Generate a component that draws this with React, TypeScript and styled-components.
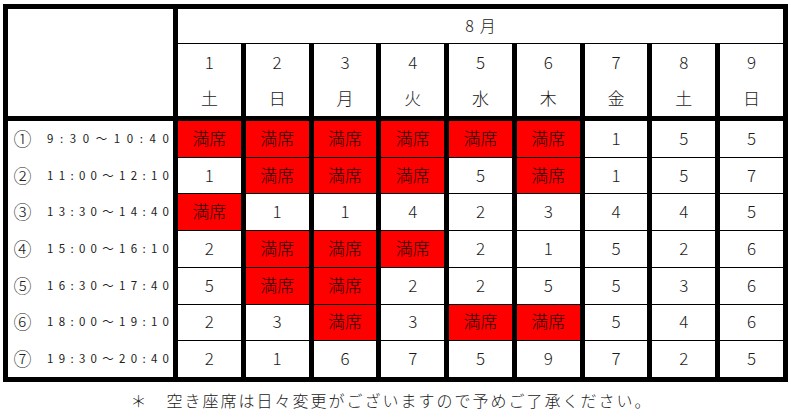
import React from "react";
import styled, { createGlobalStyle } from "styled-components";

const GlobalStyle = createGlobalStyle`
  html, body {
    margin: 0;
    padding: 0;
    background: #ffffff;
  }
  body {
    padding: 4px 0 0 3px;
    font-family: "Noto Sans CJK JP", "Noto Sans", sans-serif;
    font-weight: 300;
    color: #1a1a1a;
  }
`;

const Page = styled.div`
  width: 785px;
  display: flex;
  flex-direction: column;
`;

const Frame = styled.div`
  width: 785px;
  height: 378px;
  box-sizing: border-box;
  border: 5px solid #000;
  background: #000;
  display: flex;
  flex-direction: column;
`;

const HeaderGrid = styled.div`
  display: grid;
  grid-template-columns: 165px repeat(9, 1fr);
  grid-template-rows: 34px 72px;
  column-gap: 5px;
  row-gap: 1px;
  border-bottom: 5px solid #000;
`;

const Corner = styled.div`
  grid-row: 1 / span 2;
  background: #fff;
`;

const Month = styled.div`
  grid-column: 2 / -1;
  background: #fff;
  display: flex;
  align-items: center;
  justify-content: center;
  gap: 6px;
  font-size: 16px;
  padding-bottom: 3px;
  box-sizing: border-box;
`;

const DayHead = styled.div`
  background: #fff;
  display: grid;
  grid-template-rows: 1fr 1fr;
  justify-items: center;
  align-items: center;
  font-size: 17px;
`;

const DayNum = styled.span`
  padding-bottom: 2px;
`;

const Weekday = styled.span`
  padding-bottom: 2px;
`;

const BodyGrid = styled.div`
  flex: 1;
  display: grid;
  grid-template-columns: 165px repeat(9, 1fr);
  grid-template-rows: repeat(7, 1fr);
  column-gap: 5px;
  row-gap: 1px;
`;

const LabelColumn = styled.div`
  grid-column: 1;
  grid-row: 1 / -1;
  display: grid;
  grid-template-rows: subgrid;
  background: #fff;
`;

const Label = styled.div`
  display: flex;
  align-items: center;
  padding: 0 4px 2px 5px;
`;

const Circle = styled.span`
  font-size: 18px;
  line-height: 1;
  width: 19px;
  display: inline-flex;
  justify-content: center;
  color: #222;
`;

const TimeText = styled.span`
  flex: 1;
  margin-left: 15px;
  display: flex;
  justify-content: space-between;
  font-size: 11.5px;
  font-weight: 400;
  color: #222;
`;

const Cell = styled.div<{ $full: boolean }>`
  background: ${(p) => (p.$full ? "#ff0000" : "#ffffff")};
  color: ${(p) => (p.$full ? "#2a0000" : "#1a1a1a")};
  display: flex;
  align-items: center;
  justify-content: center;
  font-size: 17px;
  padding-bottom: 3px;
  box-sizing: border-box;
`;

const Note = styled.div`
  text-align: center;
  font-size: 16px;
  letter-spacing: 2px;
  padding-top: 6px;
  padding-right: 8px;
  color: #222;
`;

const days = [
  { d: "1", w: "土" },
  { d: "2", w: "日" },
  { d: "3", w: "月" },
  { d: "4", w: "火" },
  { d: "5", w: "水" },
  { d: "6", w: "木" },
  { d: "7", w: "金" },
  { d: "8", w: "土" },
  { d: "9", w: "日" },
];

const F = "満席";

const rows: { no: string; time: string; cells: string[] }[] = [
  { no: "①", time: "9:30～10:40", cells: [F, F, F, F, F, F, "1", "5", "5"] },
  { no: "②", time: "11:00～12:10", cells: ["1", F, F, F, "5", F, "1", "5", "7"] },
  { no: "③", time: "13:30～14:40", cells: [F, "1", "1", "4", "2", "3", "4", "4", "5"] },
  { no: "④", time: "15:00～16:10", cells: ["2", F, F, F, "2", "1", "5", "2", "6"] },
  { no: "⑤", time: "16:30～17:40", cells: ["5", F, F, "2", "2", "5", "5", "3", "6"] },
  { no: "⑥", time: "18:00～19:10", cells: ["2", "3", F, "3", F, F, "5", "4", "6"] },
  { no: "⑦", time: "19:30～20:40", cells: ["2", "1", "6", "7", "5", "9", "7", "2", "5"] },
];

export default function App() {
  return (
    <>
      <GlobalStyle />
      <Page>
        <Frame>
          <HeaderGrid>
            <Corner />
            <Month>
              <span>8</span>
              <span>月</span>
            </Month>
            {days.map((day, i) => (
              <DayHead key={i}>
                <DayNum>{day.d}</DayNum>
                <Weekday>{day.w}</Weekday>
              </DayHead>
            ))}
          </HeaderGrid>
          <BodyGrid>
            <LabelColumn>
              {rows.map((r) => (
                <Label key={r.no}>
                  <Circle>{r.no}</Circle>
                  <TimeText>
                    {Array.from(r.time).map((ch, i) => (
                      <span key={i}>{ch}</span>
                    ))}
                  </TimeText>
                </Label>
              ))}
            </LabelColumn>
            {rows.map((r) =>
              r.cells.map((c, i) => (
                <Cell key={r.no + i} $full={c === F}>
                  {c}
                </Cell>
              ))
            )}
          </BodyGrid>
        </Frame>
        <Note>＊　空き座席は日々変更がございますので予めご了承ください。</Note>
      </Page>
    </>
  );
}
